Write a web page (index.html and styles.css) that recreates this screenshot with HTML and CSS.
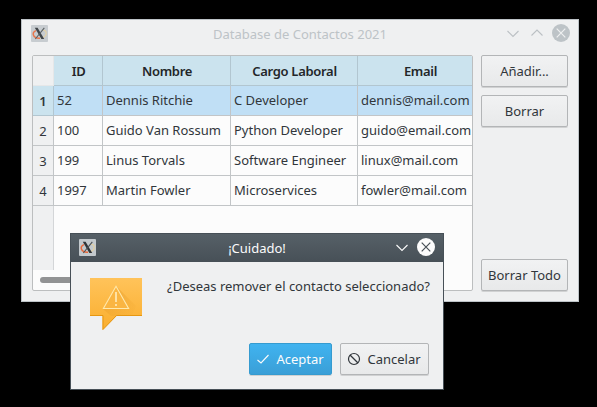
FILE: index.html
```html
<!DOCTYPE html>
<html lang="es">
<head>
<meta charset="utf-8">
<title>Database de Contactos 2021</title>
<link rel="stylesheet" href="styles.css">
</head>
<body>
<svg class="defs" width="0" height="0" aria-hidden="true">
  <symbol id="xlogo" viewBox="0 0 17 17">
    <rect width="17" height="17" rx="1" fill="#c3c9cd"/>
    <path d="M5 5.600C2.500 6.500 1.600 8.500 2.600 10.500C3.500 12.400 6.500 13.400 9 13.200" fill="none" stroke="#e9683a" stroke-width="1.500"/>
    <path d="M9.500 13.200C13 12.800 15.600 10.400 15.200 7.800C15 6 13.500 5.200 12 5" fill="none" stroke="#e3cf9f" stroke-width="1.200"/>
    <path d="M3.800 2.800H6.600L13.200 14H10.400Z" fill="#2f3438"/>
    <path d="M13.300 2.800L4.300 14" stroke="#4b5155" stroke-width="1.100"/>
  </symbol>
</svg>

<main class="window main-window">
  <header class="titlebar">
    <svg class="app-icon"><use href="#xlogo"/></svg>
    <span class="title">Database de Contactos 2021</span>
    <svg class="controls" viewBox="0 0 66 20">
      <path d="M2.500 7L8 12.500L13.500 7M26.500 11.500L32 6L37.500 11.500" fill="none" stroke="#bbc0c4" stroke-width="1.100"/>
      <circle cx="56" cy="9" r="9" fill="#bdc3c7"/>
      <path d="M51.700 4.700L60.300 13.300M60.300 4.700L51.700 13.300" stroke="#eff0f1" stroke-width="1.200"/>
    </svg>
  </header>
  <div class="content">
    <section class="table">
      <div class="row head"><span class="corner"></span><span>ID</span><span>Nombre</span><span>Cargo Laboral</span><span>Email</span></div>
      <div class="row selected"><span class="num">1</span><span>52</span><span>Dennis Ritchie</span><span>C Developer</span><span>dennis@mail.com</span></div>
      <div class="row"><span class="num">2</span><span>100</span><span>Guido Van Rossum</span><span>Python Developer</span><span>guido@email.com</span></div>
      <div class="row"><span class="num">3</span><span>199</span><span>Linus Torvals</span><span>Software Engineer</span><span>linux@mail.com</span></div>
      <div class="row"><span class="num">4</span><span>1997</span><span>Martin Fowler</span><span>Microservices</span><span>fowler@mail.com</span></div>
      <div class="gutter"></div>
      <div class="scroll"><div class="thumb"></div></div>
    </section>
    <aside class="actions">
      <button class="btn">Añadir...</button>
      <button class="btn">Borrar</button>
      <button class="btn last">Borrar Todo</button>
    </aside>
  </div>
</main>

<div class="window dialog">
  <header class="titlebar">
    <svg class="app-icon"><use href="#xlogo"/></svg>
    <span class="title">¡Cuidado!</span>
    <svg class="controls" viewBox="0 0 42 20">
      <path d="M2.500 7L8 12.500L13.500 7" fill="none" stroke="#fcfcfc" stroke-width="1.100"/>
      <circle cx="32" cy="9" r="9" fill="#fcfcfc"/>
      <path d="M27.700 4.700L36.300 13.300M36.300 4.700L27.700 13.300" stroke="#475057" stroke-width="1.200"/>
    </svg>
  </header>
  <div class="message">
    <svg class="warning" viewBox="0 0 52 53">
      <defs>
        <linearGradient id="amber" x1="0" y1="0" x2="0" y2="1"><stop offset="0" stop-color="#ffc35a"/><stop offset="1" stop-color="#faae2e"/></linearGradient>
        <linearGradient id="shade" x1="0" y1="0" x2="1" y2="1"><stop offset="0" stop-color="#d98a18" stop-opacity=".5"/><stop offset="1" stop-color="#e69a22" stop-opacity="0"/></linearGradient>
      </defs>
      <path d="M0 0H52V38H26.500L12.500 52V38H0Z" fill="url(#amber)"/>
      <path d="M26 8L46 28L42 38H21L13 31Z" fill="url(#shade)"/>
      <path d="M0 37.500H13V51.500L26.500 37.500H52" fill="none" stroke="#e69712"/>
      <path d="M26 8.300L38.600 30.500H13.400Z" fill="#fab542" stroke="#ffe9ad" stroke-width="1.100"/>
      <path d="M26 14V24M26 26V28" stroke="#fff0c4" stroke-width="1.500"/>
    </svg>
    <p>¿Deseas remover el contacto seleccionado?</p>
  </div>
  <footer class="dialog-actions">
    <button class="btn primary"><svg viewBox="0 0 16 16"><path d="M2.500 9L6 12L13.500 4" fill="none" stroke="#fcfcfc" stroke-width="1.100"/></svg>Aceptar</button>
    <button class="btn cancel"><svg viewBox="0 0 16 16"><path d="M4 4L12 12" stroke="#31363b" stroke-width="1.200"/><circle cx="8" cy="8" r="5.500" fill="none" stroke="#31363b" stroke-width="1.200"/></svg>Cancelar</button>
  </footer>
</div>
</body>
</html>
```
FILE: styles.css
```css
* { box-sizing: border-box; }
body {
  margin: 0;
  height: 407px;
  overflow: hidden;
  background: #000;
  color: #31363b;
  font: 13px/18px "Noto Sans", sans-serif;
}
.defs { position: absolute; }
.window {
  position: absolute;
  background: #eff0f1;
  display: flex;
  flex-direction: column;
}
.main-window {
  left: 21px;
  top: 19px;
  width: 558px;
  height: 283px;
  border: 1px solid #bdc3c7;
}
.dialog {
  left: 70px;
  top: 233px;
  width: 374px;
  height: 157px;
  border: 1px solid #475057;
}
.titlebar {
  display: flex;
  align-items: center;
  height: 28px;
  flex: none;
}
.app-icon { width: 17px; height: 17px; margin: 0 0 1px 9px; flex: none; }
.title { flex: 1; text-align: center; }
.controls { height: 20px; flex: none; }
.main-window .titlebar { color: #bdc3c7; padding-right: 7px; }
.main-window .app-icon { opacity: .9; }
.main-window .controls { width: 66px; }
.main-window .title { padding-left: 47px; margin-top: -1px; }
.dialog .titlebar {
  color: #fcfcfc;
  background: linear-gradient(#566067, #475057);
  padding-right: 7px;
}
.dialog .app-icon { margin-left: 8px; margin-right: 1px; }
.dialog .controls { width: 42px; }
.dialog .title { padding-left: 23px; margin-top: -1px; }

.content {
  flex: 1;
  display: flex;
  gap: 8px;
  padding: 7px 10px 10px;
}
.table {
  display: flex;
  flex-direction: column;
  width: 441px;
  border: 1px solid #bcbebf;
  border-radius: 2px;
  background: #fcfcfc;
  overflow: hidden;
}
.row {
  display: grid;
  grid-template-columns: 21px 49px 128px 127px 125px;
  height: 30px;
  flex: none;
}
.row span {
  padding: 5px 3px 0;
  border-right: 1px solid #c2c5c7;
  border-bottom: 1px solid #c2c5c7;
  white-space: nowrap;
}
.row .num {
  background: #eff0f1;
  padding: 6px 0 0;
  text-align: center;
}
.head span {
  padding: 6px 2px 0 3px;
  background: #cbe3ee;
  border-color: #b2c6d0;
  text-align: center;
  font-weight: 600;
  letter-spacing: -0.3px;
  color: #232629;
}
.head .corner { background: #eff0f1; border-color: #e6e7e8; }
.selected span { background: #c0dff5; }
.selected .num { background: #cbe3ee; border-color: #b2c6d0; font-weight: 600; }
.gutter {
  width: 21px;
  flex: 1;
  background: #eff0f1;
  border-right: 1px solid #d4d6d8;
}
.scroll { height: 20px; padding: 7px 7px 0; }
.thumb { width: 350px; height: 6px; border-radius: 3px; background: #929394; }

.actions {
  width: 87px;
  display: flex;
  flex-direction: column;
  gap: 8px;
}
.btn {
  display: flex;
  align-items: center;
  justify-content: center;
  height: 32px;
  padding: 0;
  border: 1px solid #b3b5b7;
  border-radius: 2px;
  background: linear-gradient(#f1f2f3, #e8e9ea);
  box-shadow: 0 1px 0 #d0d1d2;
  color: #31363b;
  font: inherit;
  white-space: nowrap;
}
.last { margin-top: auto; }
.message { display: flex; gap: 25px; padding: 16px 0 0 19px; }
.warning { width: 52px; height: 53px; flex: none; }
.message p { margin: -1px 0 0; white-space: nowrap; }
.dialog-actions {
  display: flex;
  gap: 8px;
  justify-content: flex-end;
  margin-top: auto;
  padding: 0 14px 14px 0;
}
.dialog-actions svg { width: 16px; height: 16px; margin-right: 5px; }
.dialog-actions .btn { padding-right: 2px; }
.primary {
  width: 83px;
  color: #fcfcfc;
  border-color: #359bd0;
  background: linear-gradient(#40b3f0, #3a9fd7);
}
.cancel { width: 89px; }
```
